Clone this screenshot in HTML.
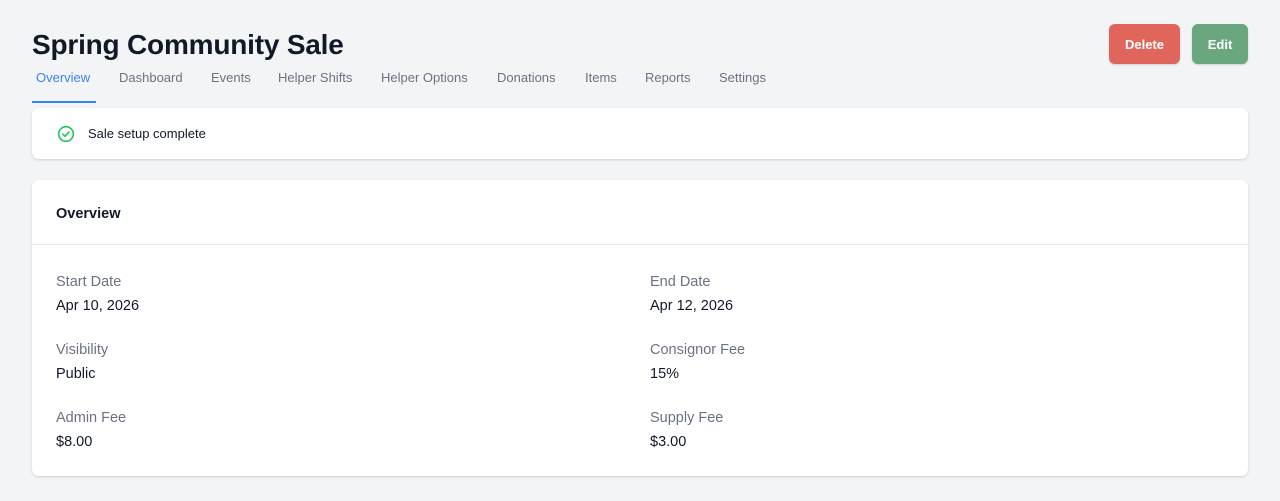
<!DOCTYPE html>
<html><head><meta charset="utf-8"><style>
*{margin:0;padding:0;box-sizing:border-box}
body{width:1280px;height:501px;background:#f3f4f6;font-family:"Liberation Sans",Arial,sans-serif;position:relative;overflow:hidden;color:#111827}
.a{position:absolute;white-space:nowrap}
h1{position:absolute;left:32px;top:28px;font-size:28px;font-weight:700;color:#111827;letter-spacing:-0.2px;line-height:34px}
.btn{position:absolute;top:24px;height:40px;border-radius:6px;color:#fff;font-weight:700;font-size:13px;display:flex;align-items:center;justify-content:center;box-shadow:0 1px 2px rgba(0,0,0,.15)}
.tab{position:absolute;top:70px;font-size:13px;color:#6b7280;line-height:16px}
.card{position:absolute;left:32px;width:1216px;background:#fff;border-radius:7px;box-shadow:0 1px 3px rgba(0,0,0,.1),0 1px 2px rgba(0,0,0,.06)}
.lab{position:absolute;font-size:14.5px;color:#6b7280;line-height:18px}
.val{position:absolute;font-size:14.5px;color:#111827;line-height:18px}
</style></head><body>
<h1>Spring Community Sale</h1>
<div class="btn" style="left:1109px;width:71px;background:#e0665b">Delete</div>
<div class="btn" style="left:1192px;width:56px;background:#6aa77f">Edit</div>
<div class="tab" style="left:36px;color:#3b82f6">Overview</div>
<div class="tab" style="left:119px">Dashboard</div>
<div class="tab" style="left:211px">Events</div>
<div class="tab" style="left:278px">Helper Shifts</div>
<div class="tab" style="left:381px">Helper Options</div>
<div class="tab" style="left:497px">Donations</div>
<div class="tab" style="left:585px">Items</div>
<div class="tab" style="left:645px">Reports</div>
<div class="tab" style="left:719px">Settings</div>
<div class="a" style="left:32px;top:101px;width:64px;height:2px;background:#3b82f6"></div>
<div class="card" style="top:108px;height:51px">
<svg class="a" style="left:25px;top:17px" width="18" height="18" viewBox="0 0 18 18"><circle cx="9" cy="9" r="7.3" fill="none" stroke="#22c55e" stroke-width="1.6"/><path d="M5.8 9.2l2.2 2.1 4-4.2" fill="none" stroke="#22c55e" stroke-width="1.6" stroke-linecap="round" stroke-linejoin="round"/></svg>
<div class="a" style="left:56px;top:18px;font-size:13px;line-height:16px">Sale setup complete</div>
</div>
<div class="card" style="top:180px;height:296px">
<div class="a" style="left:24px;top:25px;font-size:14.5px;font-weight:700;line-height:18px">Overview</div>
<div class="a" style="left:0;top:64px;width:1216px;height:1px;background:#e5e7eb"></div>
<div class="lab" style="left:24px;top:93px">Start Date</div>
<div class="val" style="left:24px;top:117px">Apr 10, 2026</div>
<div class="lab" style="left:618px;top:93px">End Date</div>
<div class="val" style="left:618px;top:117px">Apr 12, 2026</div>
<div class="lab" style="left:24px;top:161px">Visibility</div>
<div class="val" style="left:24px;top:185px">Public</div>
<div class="lab" style="left:618px;top:161px">Consignor Fee</div>
<div class="val" style="left:618px;top:185px">15%</div>
<div class="lab" style="left:24px;top:229px">Admin Fee</div>
<div class="val" style="left:24px;top:253px">$8.00</div>
<div class="lab" style="left:618px;top:229px">Supply Fee</div>
<div class="val" style="left:618px;top:253px">$3.00</div>
</div>
</body></html>
